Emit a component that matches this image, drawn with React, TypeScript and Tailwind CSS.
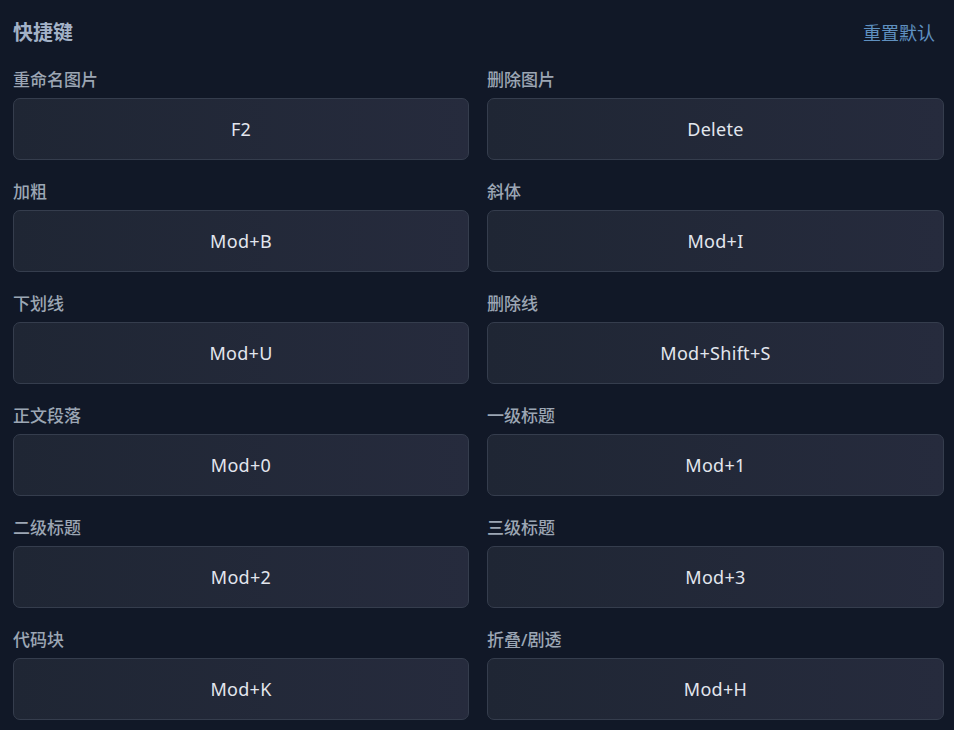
const shortcuts = [
  { label: "重命名图片", keys: "F2" },
  { label: "删除图片", keys: "Delete" },
  { label: "加粗", keys: "Mod+B" },
  { label: "斜体", keys: "Mod+I" },
  { label: "下划线", keys: "Mod+U" },
  { label: "删除线", keys: "Mod+Shift+S" },
  { label: "正文段落", keys: "Mod+0" },
  { label: "一级标题", keys: "Mod+1" },
  { label: "二级标题", keys: "Mod+2" },
  { label: "三级标题", keys: "Mod+3" },
  { label: "代码块", keys: "Mod+K" },
  { label: "折叠/剧透", keys: "Mod+H" },
];

const App = () => {
  return (
    <div
      className="min-h-screen bg-[#111827] pl-[13px] pr-[10px] pt-[22px]"
      style={{ fontFamily: '"Noto Sans", "Noto Sans CJK SC", sans-serif' }}
    >
      <div className="flex items-center justify-between h-[22px] mb-[25px]">
        <h2 className="text-[20px] font-bold text-[#a3b2c7] leading-[22px]">快捷键</h2>
        <button className="text-[18px] text-[#5f90c0] leading-[22px] pr-[9px]">重置默认</button>
      </div>

      <div className="grid grid-cols-[456px_1fr] gap-x-[18px] gap-y-[21px]">
        {shortcuts.map((item, index) => (
          <div key={index}>
            <div className="text-[17px] font-medium text-[#9ca6b4] leading-[22px] mb-[7px]">
              {item.label}
            </div>
            <button className="w-full h-[62px] rounded-[7px] border border-[#353d4d] bg-gradient-to-r from-[#1f2634] to-[#262b3d] text-[18px] tracking-[0.3px] text-[#e2e6ee] flex items-center justify-center">
              {item.keys}
            </button>
          </div>
        ))}
      </div>
    </div>
  );
};

export default App;
